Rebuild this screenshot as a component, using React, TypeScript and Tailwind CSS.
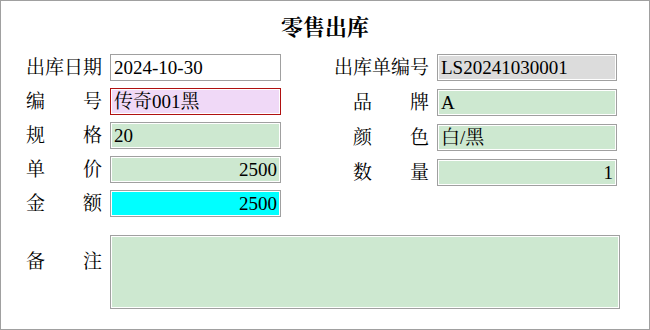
import React from "react";

const font = {
	fontFamily: '"Liberation Serif", "Noto Serif CJK SC", "Noto Sans CJK SC", serif',
};

function Label({ text, wide }: { text: string; wide?: boolean }) {
	const chars = text.split("");
	if (chars.length === 2) {
		return (
			<div className={`flex justify-end shrink-0 ${wide ? "w-[95px]" : "w-[76px]"}`}>
				<div className="flex w-[76px] justify-between">
					<span>{chars[0]}</span>
					<span>{chars[1]}</span>
				</div>
			</div>
		);
	}
	return <div className={`shrink-0 text-right ${wide ? "w-[95px]" : "w-[76px]"}`}>{text}</div>;
}

function Field({
	value,
	bg,
	right,
	border = "border-[#a0a0a0]",
	width,
}: {
	value: string;
	bg: string;
	right?: boolean;
	border?: string;
	width: string;
}) {
	return (
		<div
			className={`h-[27px] border ${border} ${bg} ${width} shadow-[inset_0_0_0_1px_#ffffff] flex items-center px-[3px] ${
				right ? "justify-end" : ""
			}`}
		>
			<span className="leading-none">{value}</span>
		</div>
	);
}

export default function App() {
	return (
		<div
			className="w-[650px] h-[330px] border border-[#a0a0a0] bg-white text-[19px] leading-[20px] text-black"
			style={font}
		>
			<h1 className="pt-[13px] h-[41px] leading-[28px] text-center text-[22px] font-bold">
				零售出库
			</h1>

			<div className="mt-[12px] flex pl-[25px]">
				<div className="flex flex-col gap-[7px]">
					<div className="flex items-center gap-[8px]">
						<Label text="出库日期" />
						<Field value="2024-10-30" bg="bg-white" width="w-[171px]" />
					</div>
					<div className="flex items-center gap-[8px]">
						<Label text="编号" />
						<Field value="传奇001黑" bg="bg-[#f0d9f7]" border="border-[#b01010]" width="w-[171px]" />
					</div>
					<div className="flex items-center gap-[8px]">
						<Label text="规格" />
						<Field value="20" bg="bg-[#cde8d0]" width="w-[171px]" />
					</div>
					<div className="flex items-center gap-[8px]">
						<Label text="单价" />
						<Field value="2500" bg="bg-[#cde8d0]" right width="w-[171px]" />
					</div>
					<div className="flex items-center gap-[8px]">
						<Label text="金额" />
						<Field value="2500" bg="bg-[#00ffff]" right width="w-[171px]" />
					</div>
				</div>

				<div className="ml-[53px] flex flex-col gap-[8px]">
					<div className="flex items-center gap-[8px]">
						<Label text="出库单编号" wide />
						<Field value="LS20241030001" bg="bg-[#dcdcdc]" width="w-[180px]" />
					</div>
					<div className="flex items-center gap-[8px]">
						<Label text="品牌" wide />
						<Field value="A" bg="bg-[#cde8d0]" width="w-[180px]" />
					</div>
					<div className="flex items-center gap-[8px]">
						<Label text="颜色" wide />
						<Field value="白/黑" bg="bg-[#cde8d0]" width="w-[180px]" />
					</div>
					<div className="flex items-center gap-[8px]">
						<Label text="数量" wide />
						<Field value="1" bg="bg-[#cde8d0]" right width="w-[180px]" />
					</div>
				</div>
			</div>

			<div className="mt-[18px] flex items-start gap-[8px] pl-[25px]">
				<div className="pt-[17px]">
					<Label text="备注" />
				</div>
				<div className="h-[74px] w-[510px] border border-[#a0a0a0] bg-[#cde8d0] shadow-[inset_0_0_0_1px_#ffffff]" />
			</div>
		</div>
	);
}
